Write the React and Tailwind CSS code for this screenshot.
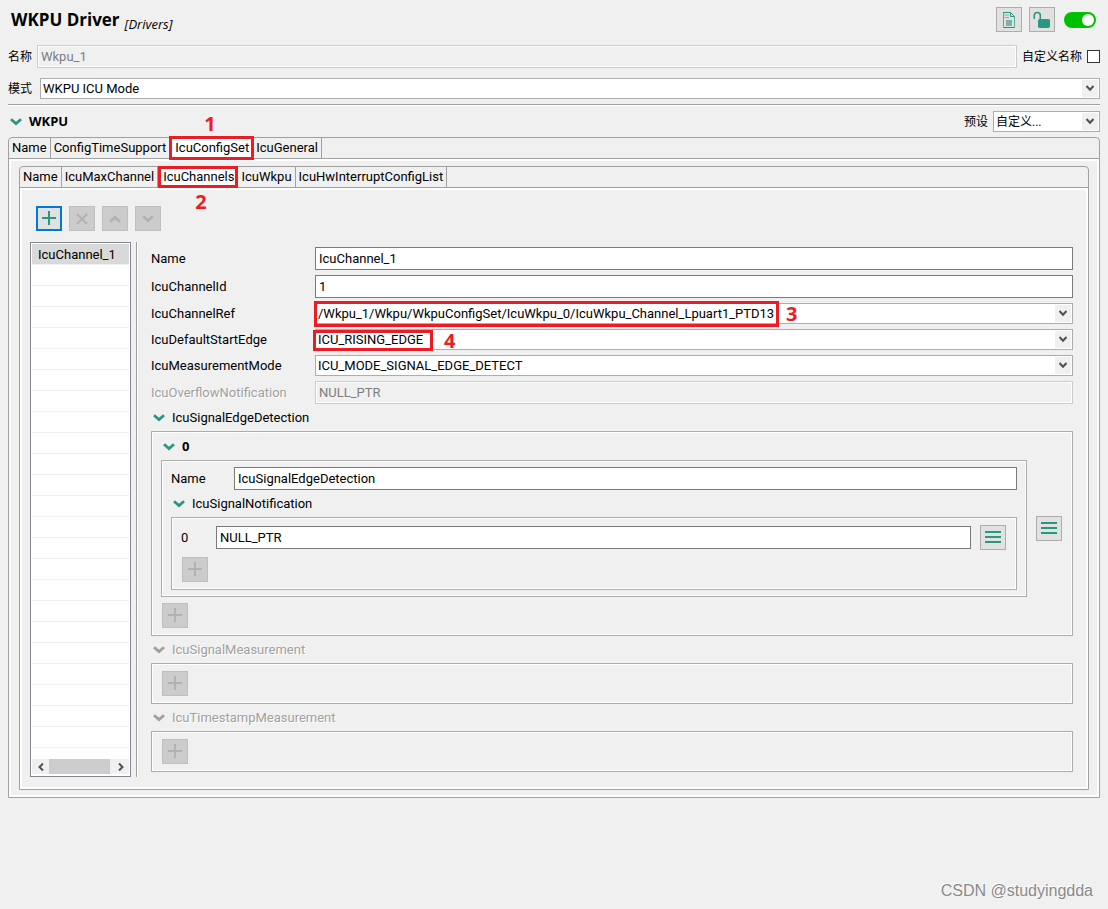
import React, { useState } from 'react';

const outerTabs = ['Name', 'ConfigTimeSupport', 'IcuConfigSet', 'IcuGeneral'];
const innerTabs = ['Name', 'IcuMaxChannel', 'IcuChannels', 'IcuWkpu', 'IcuHwInterruptConfigList'];
const emptyRows = Array.from({ length: 23 }, (_, i) => i);

function Chevron({ className = 'text-[#2a9782]' }) {
  return (
    <svg width="12" height="8" viewBox="0 0 12 8" fill="none" stroke="currentColor" strokeWidth="2.8" className={className}>
      <path d="M1 1.2L6 5.6L11 1.2" />
    </svg>
  );
}

function ToolButton({ label, disabled, focused, children }) {
  let look = 'border border-[#adadad] bg-[#e1e1e1] text-[#2a9782]';
  if (disabled) look = 'border border-[#bfbfbf] bg-[#cccccc] text-[#b2b2b2]';
  if (focused) look = 'border-2 border-[#0078d7] bg-[#e1e1e1] text-[#2a9782]';
  return (
    <button
      type="button"
      aria-label={label}
      disabled={disabled}
      className={`flex h-[25px] w-[26px] shrink-0 items-center justify-center ${look}`}
    >
      {children}
    </button>
  );
}

function PlusIcon() {
  return (
    <svg width="14" height="15" viewBox="0 0 14 15" fill="none" stroke="currentColor" strokeWidth="2">
      <path d="M7 0V14M0 7H14" />
    </svg>
  );
}

function MenuIcon() {
  return (
    <svg width="16" height="13" viewBox="0 0 16 13" fill="currentColor">
      <path d="M0 0H16V2H0ZM0 5H16V7H0ZM0 10H16V12H0Z" />
    </svg>
  );
}

function TextBox({ id, value, disabled, label }) {
  return (
    <input
      id={id}
      type="text"
      aria-label={label}
      defaultValue={value}
      disabled={disabled}
      className="h-[23px] w-full min-w-0 border border-[#7a7a7a] bg-white px-[3px] leading-5 outline-none disabled:border-[#cccccc] disabled:bg-[#f0f0f0] disabled:text-[#7d7d7d] disabled:shadow-[inset_0_0_0_1px_#fff]"
    />
  );
}

function SelectBox({ id, value, className = '' }) {
  return (
    <div className="relative w-full min-w-0">
      <select
        id={id}
        defaultValue={value}
        className={`block h-[21px] w-full appearance-none border border-[#adadad] bg-white pr-5 pl-[2px] outline-none ${className}`}
      >
        <option>{value}</option>
      </select>
      <span className="pointer-events-none absolute top-[2px] right-[2px] flex h-[17px] w-4 items-center justify-center bg-[#f0f0f0]">
        <svg width="8" height="7" viewBox="0 0 8 7" fill="none" stroke="#505050" strokeWidth="2">
          <path d="M0.5 1L4 4.8L7.5 1" />
        </svg>
      </span>
    </div>
  );
}

function Field({ id, label, disabled, children }) {
  return (
    <div className="flex items-center">
      <label
        htmlFor={id}
        className={`w-[164px] shrink-0 leading-5 ${disabled ? 'text-[#a0a0a0] [text-shadow:1px_1px_0_#fff]' : ''}`}
      >
        {label}
      </label>
      <div className="relative min-w-0 flex-1">{children}</div>
    </div>
  );
}

function SectionTitle({ children, disabled, bold }) {
  return (
    <button
      type="button"
      disabled={disabled}
      className={`flex h-[17px] items-center gap-[7px] pl-[2px] ${bold ? "font-['Open_Sans',sans-serif] font-bold" : ''} ${
        disabled ? 'text-[#a0a0a0] [text-shadow:1px_1px_0_#fff]' : ''
      }`}
    >
      <Chevron className={disabled ? 'text-[#a0a0a0]' : 'text-[#2a9782]'} />
      {children}
    </button>
  );
}

function Group({ className = '', children }) {
  return <div className={`border border-[#acacac] shadow-[inset_0_0_0_1px_#fff] ${className}`}>{children}</div>;
}

function Callout({ box, number, numberClass }) {
  return (
    <>
      <span className={`pointer-events-none absolute z-10 border-[3px] border-[#ed1c24] ${box}`} />
      <span
        className={`pointer-events-none absolute z-10 font-['Open_Sans',sans-serif] text-xl leading-5 font-bold text-[#ed1c24] ${numberClass}`}
      >
        {number}
      </span>
    </>
  );
}

function TabFolder({ tabs, active, callout, bodyClass, children }) {
  const [current, setCurrent] = useState(active);
  return (
    <div className="rounded-t border border-[#a0a0a0]">
      <div role="tablist" className="flex h-[21px] border-b border-[#a0a0a0]">
        {tabs.map((tab) => (
          <div key={tab} className="relative flex">
            <button
              type="button"
              role="tab"
              aria-selected={tab === current}
              onClick={() => setCurrent(tab)}
              className={`border-r border-[#a0a0a0] leading-5 ${tab === current ? 'bg-white pr-[3px] pl-[5px]' : 'px-[3px]'}`}
            >
              {tab}
            </button>
            {tab === active && callout}
          </div>
        ))}
      </div>
      <div className={`border-2 border-white ${bodyClass}`}>{children}</div>
    </div>
  );
}

function ChannelList() {
  return (
    <div className="flex w-[101px] shrink-0 flex-col border border-[#828790] bg-white px-px pt-px pb-[2px]">
      <ul className="flex-1 overflow-hidden">
        <li className="flex h-[21px] items-end border-b border-[#f0f0f0] bg-[#d9d9d9] pl-[6px] leading-[19px]">IcuChannel_1</li>
        {emptyRows.map((row) => (
          <li key={row} className="h-[21px] border-b border-[#f0f0f0]" />
        ))}
      </ul>
      <div className="flex h-[15px] bg-[#f0f0f0]">
        <button type="button" aria-label="Scroll left" className="flex w-[17px] items-center justify-center">
          <svg width="6" height="8" viewBox="0 0 6 8" fill="none" stroke="#505050" strokeWidth="2">
            <path d="M5 0.5L1.5 4L5 7.5" />
          </svg>
        </button>
        <div className="flex-1">
          <div className="h-full w-[61px] bg-[#cdcdcd]" />
        </div>
        <button type="button" aria-label="Scroll right" className="flex w-[17px] items-center justify-center">
          <svg width="6" height="8" viewBox="0 0 6 8" fill="none" stroke="#505050" strokeWidth="2">
            <path d="M1 0.5L4.5 4L1 7.5" />
          </svg>
        </button>
      </div>
    </div>
  );
}

function ChannelForm() {
  return (
    <div className="flex min-w-0 flex-1 flex-col gap-[5px] py-[5px]">
      <Field id="ch-name" label="Name">
        <TextBox id="ch-name" value="IcuChannel_1" />
      </Field>
      <Field id="ch-id" label="IcuChannelId">
        <TextBox id="ch-id" value="1" />
      </Field>
      <Field id="ch-ref" label="IcuChannelRef">
        <SelectBox id="ch-ref" value="/Wkpu_1/Wkpu/WkpuConfigSet/IcuWkpu_0/IcuWkpu_Channel_Lpuart1_PTD13" />
        <Callout box="-top-[2px] -left-px h-[26px] w-[465px]" number="3" numberClass="top-[1px] left-[471px]" />
      </Field>
      <Field id="ch-edge" label="IcuDefaultStartEdge">
        <SelectBox id="ch-edge" value="ICU_RISING_EDGE" />
        <Callout box="top-[1px] -left-[2px] h-[21px] w-[120px]" number="4" numberClass="top-[2px] left-[129px]" />
      </Field>
      <Field id="ch-mode" label="IcuMeasurementMode">
        <SelectBox id="ch-mode" value="ICU_MODE_SIGNAL_EDGE_DETECT" />
      </Field>
      <Field id="ch-overflow" label="IcuOverflowNotification" disabled>
        <TextBox id="ch-overflow" value="NULL_PTR" disabled />
      </Field>

      <SectionTitle>IcuSignalEdgeDetection</SectionTitle>
      <Group className="flex flex-col gap-[5px] px-[9px] pt-[6px] pb-[7px]">
        <SectionTitle bold>0</SectionTitle>
        <div className="flex items-center gap-[9px] pr-[1px]">
          <Group className="flex min-w-0 flex-1 flex-col gap-[5px] px-[9px] py-[6px]">
            <div className="flex items-center">
              <label htmlFor="sig-name" className="w-[63px] shrink-0 leading-5">Name</label>
              <TextBox id="sig-name" value="IcuSignalEdgeDetection" />
            </div>
            <SectionTitle>IcuSignalNotification</SectionTitle>
            <Group className="flex flex-col gap-[7px] px-[9px] py-[7px]">
              <div className="flex items-center">
                <label htmlFor="sig-notify" className="w-[35px] shrink-0 leading-5">0</label>
                <TextBox id="sig-notify" value="NULL_PTR" />
                <div className="pr-px pl-[9px]">
                  <ToolButton label="Notification menu"><MenuIcon /></ToolButton>
                </div>
              </div>
              <div className="pl-px">
                <ToolButton label="Add notification" disabled><PlusIcon /></ToolButton>
              </div>
            </Group>
          </Group>
          <ToolButton label="Detection menu"><MenuIcon /></ToolButton>
        </div>
        <div className="pt-px pl-px">
          <ToolButton label="Add edge detection" disabled><PlusIcon /></ToolButton>
        </div>
      </Group>

      <SectionTitle disabled>IcuSignalMeasurement</SectionTitle>
      <Group className="px-[10px] py-[7px]">
        <ToolButton label="Add signal measurement" disabled><PlusIcon /></ToolButton>
      </Group>

      <SectionTitle disabled>IcuTimestampMeasurement</SectionTitle>
      <Group className="px-[10px] py-[7px]">
        <ToolButton label="Add timestamp measurement" disabled><PlusIcon /></ToolButton>
      </Group>
    </div>
  );
}

export default function App() {
  const [enabled, setEnabled] = useState(true);

  return (
    <div className="relative min-h-screen bg-[#f0f0f0] px-2 pt-[7px] font-['Roboto','Noto_Sans_CJK_SC',sans-serif] text-[13px] text-black">
      {/* Title bar */}
      <header className="flex items-center">
        <div className="flex flex-1 items-end gap-[5px] pl-[3px]">
          <h1 className="font-['Open_Sans',sans-serif] text-[17px] leading-6 font-bold">WKPU Driver</h1>
          <span className="font-['Open_Sans',sans-serif] text-[13px] leading-4 italic">[Drivers]</span>
        </div>
        <div className="flex items-center gap-[7px] pr-1">
          <ToolButton label="Documentation">
            <svg width="12" height="16" viewBox="0 0 12 16" fill="none" stroke="currentColor">
              <path d="M7.5 0.5H0.5V15.5H11.5V4.5" opacity="0.75" />
              <path d="M0 0.5H7.5L11.5 4.5M0.5 15.5H11.5" />
              <path d="M7.5 0.5V4.5H11.5" />
              <path d="M1.5 3H6M1.5 5.5H6" opacity="0.6" />
              <path d="M3 8H9V14H3Z" fill="currentColor" stroke="none" opacity="0.6" />
            </svg>
          </ToolButton>
          <ToolButton label="Unlock">
            <svg width="18" height="18" viewBox="0 0 18 18">
              <path d="M1.3 8V4.3C1.3 0.6 7.3 0.6 7.3 4.3V8.5" fill="none" stroke="currentColor" strokeWidth="1.6" />
              <rect x="5" y="8" width="12" height="9" rx="1.8" fill="currentColor" />
            </svg>
          </ToolButton>
          <button
            type="button"
            role="switch"
            aria-checked={enabled}
            aria-label="Enable driver"
            onClick={() => setEnabled(!enabled)}
            className={`ml-[2px] flex h-4 w-8 items-center rounded-full px-[2px] ${
              enabled ? 'justify-end bg-[#00c000]' : 'justify-start bg-[#a0a0a0]'
            }`}
          >
            <span className="h-3 w-3 rounded-full bg-white" />
          </button>
        </div>
      </header>

      {/* Component name and mode */}
      <div className="mt-[13px] flex items-center">
        <label htmlFor="comp-name" className="w-[29px] shrink-0 text-xs">名称</label>
        <TextBox id="comp-name" value="Wkpu_1" disabled />
        <label htmlFor="custom-name" className="shrink-0 pr-[5px] pl-[5px] text-xs">自定义名称</label>
        <input
          id="custom-name"
          type="checkbox"
          className="h-[13px] w-[13px] shrink-0 appearance-none border border-[#333333] bg-white checked:bg-[#333333]"
        />
      </div>
      <div className="mt-[10px] flex items-center">
        <label htmlFor="comp-mode" className="w-8 shrink-0 text-xs">模式</label>
        <SelectBox id="comp-mode" value="WKPU ICU Mode" />
      </div>
      <hr className="mt-[5px] h-[2px] border-t border-b border-t-[#a0a0a0] border-b-white" />

      {/* WKPU section */}
      <div className="mt-[5px] flex items-center justify-between">
        <SectionTitle bold>WKPU</SectionTitle>
        <div className="flex items-center">
          <label htmlFor="preset" className="w-[29px] shrink-0 text-xs">预设</label>
          <div className="w-[107px]">
            <SelectBox id="preset" value="自定义..." className="text-xs" />
          </div>
        </div>
      </div>

      <div className="mt-[5px]">
        <TabFolder
          tabs={outerTabs}
          active="IcuConfigSet"
          bodyClass="px-2 py-[5px]"
          callout={<Callout box="-inset-x-px -top-[2px] h-6" number="1" numberClass="-top-6 left-[34px]" />}
        >
          <TabFolder
            tabs={innerTabs}
            active="IcuChannels"
            bodyClass="pt-4 pr-[13px] pb-[10px] pl-2"
            callout={<Callout box="inset-x-0 -top-px h-[22px]" number="2" numberClass="top-[25px] left-[37px]" />}
          >
            <div className="mb-[11px] flex gap-[7px] pl-[6px]">
              <ToolButton label="Add channel" focused><PlusIcon /></ToolButton>
              <ToolButton label="Remove channel" disabled>
                <svg width="12" height="12" viewBox="0 0 12 12" fill="none" stroke="currentColor" strokeWidth="2">
                  <path d="M1 1L11 11M11 1L1 11" />
                </svg>
              </ToolButton>
              <ToolButton label="Move up" disabled>
                <svg width="12" height="8" viewBox="0 0 12 8" fill="none" stroke="currentColor" strokeWidth="2.8">
                  <path d="M1 6.8L6 2.4L11 6.8" />
                </svg>
              </ToolButton>
              <ToolButton label="Move down" disabled><Chevron className="text-[#b2b2b2]" /></ToolButton>
            </div>
            <div className="flex">
              <ChannelList />
              <div className="mr-[13px] ml-[5px] w-[2px] shrink-0 border-r border-l border-r-white border-l-[#a0a0a0]" />
              <ChannelForm />
            </div>
          </TabFolder>
        </TabFolder>
      </div>

      <p className="absolute right-[15px] bottom-2 font-['Liberation_Sans',sans-serif] text-base leading-5 text-[#8a8a8a] [text-shadow:-1px_-1px_0_#fff]">
        CSDN @studyingdda
      </p>
    </div>
  );
}
